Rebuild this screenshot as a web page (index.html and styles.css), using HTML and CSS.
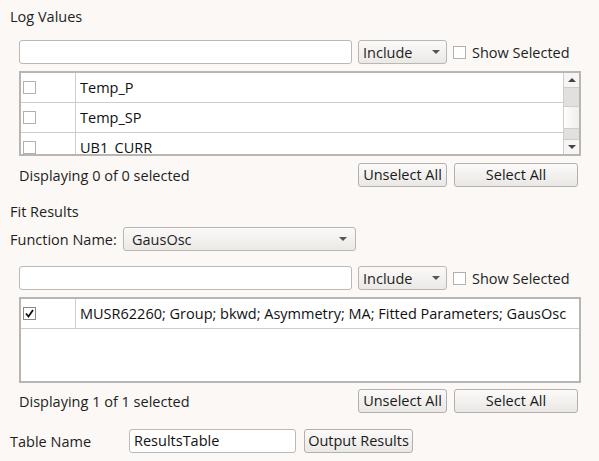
FILE: index.html
```html
<!DOCTYPE html>
<html>
<head>
<meta charset="utf-8">
<link rel="stylesheet" href="styles.css">
</head>
<body>
<div class="panel">
  <div class="title">Log Values</div>
  <div class="group">
    <div class="filter-row">
      <div class="search"></div>
      <div class="combo combo-inc"><span>Include</span><span class="arrow"></span></div>
      <label class="show"><span class="cb"></span><span>Show Selected</span></label>
    </div>
    <div class="table t1">
      <div class="rows">
        <div class="row"><div class="c1"><span class="cb"></span></div><div class="c2">Temp_P</div></div>
        <div class="row"><div class="c1"><span class="cb"></span></div><div class="c2">Temp_SP</div></div>
        <div class="row"><div class="c1"><span class="cb"></span></div><div class="c2">UB1_CURR</div></div>
      </div>
      <div class="scrollbar">
        <div class="sb-btn"><span class="tri-up"></span></div>
        <div class="sb-track t-a"></div>
        <div class="sb-thumb"></div>
        <div class="sb-track t-b"></div>
        <div class="sb-btn"><span class="tri-down"></span></div>
      </div>
    </div>
    <div class="foot">
      <span class="status">Displaying 0 of 0 selected</span>
      <div class="btns">
        <div class="btn b-unsel">Unselect All</div>
        <div class="btn b-sel">Select All</div>
      </div>
    </div>
  </div>

  <div class="title t-fit">Fit Results</div>
  <div class="func-row">
    <span class="func-label">Function Name:</span>
    <div class="combo combo-func"><span>GausOsc</span><span class="arrow"></span></div>
  </div>
  <div class="group">
    <div class="filter-row fr2">
      <div class="search"></div>
      <div class="combo combo-inc"><span>Include</span><span class="arrow"></span></div>
      <label class="show"><span class="cb"></span><span>Show Selected</span></label>
    </div>
    <div class="table t2">
      <div class="rows">
        <div class="row"><div class="c1"><span class="cb checked"><svg width="11" height="11" viewBox="0 0 11 11"><path d="M2 5.5 L4.5 8.5 L9 2" fill="none" stroke="#111" stroke-width="1.8"/></svg></span></div><div class="c2">MUSR62260; Group; bkwd; Asymmetry; MA; Fitted Parameters; GausOsc</div></div>
      </div>
    </div>
    <div class="foot f2">
      <span class="status">Displaying 1 of 1 selected</span>
      <div class="btns">
        <div class="btn b-unsel">Unselect All</div>
        <div class="btn b-sel">Select All</div>
      </div>
    </div>
  </div>
  <div class="name-row">
    <span class="name-label">Table Name</span>
    <div class="name-input">ResultsTable</div>
    <div class="btn b-out">Output Results</div>
  </div>
</div>
</body>
</html>
```

FILE: styles.css
```css
html, body {
  margin: 0;
  padding: 0;
  background: #fbf8f5;
}
body {
  font-family: "Open Sans", "Noto Sans", sans-serif;
  font-size: 14.5px;
  color: #1e1e1e;
  width: 599px;
  height: 461px;
  overflow: hidden;
}
.panel {
  padding: 7px 0 0 0;
}
.title {
  line-height: 20px;
  height: 20px;
  padding-left: 10px;
}
.t-fit {
  margin-top: 15px;
}
.group {
  padding-left: 19px;
  padding-right: 18px;
}
.filter-row {
  display: flex;
  align-items: center;
  height: 24px;
  margin-top: 13px;
}
.fr2 {
  margin-top: 15px;
}
.search {
  width: 331px;
  height: 22px;
  border: 1px solid #bdb9b4;
  border-radius: 3px;
  background: #fff;
}
.combo {
  display: flex;
  align-items: center;
  justify-content: space-between;
  height: 22px;
  border: 1px solid #bab6b1;
  border-radius: 3px;
  background: linear-gradient(#fbfaf9, #ebe9e6);
  box-sizing: content-box;
}
.combo-inc {
  width: 77px;
  margin-left: 6px;
  padding: 0 6px 0 4px;
}
.arrow {
  width: 0;
  height: 0;
  border-left: 4px solid transparent;
  border-right: 4px solid transparent;
  border-top: 4px solid #555;
}
.show {
  display: flex;
  align-items: center;
  margin-left: 6px;
}
.cb {
  display: inline-flex;
  align-items: center;
  justify-content: center;
  width: 11px;
  height: 11px;
  border: 1px solid #b3b1ae;
  background: #fff;
}
.show .cb {
  margin-right: 6px;
}
.cb.checked {
  border-color: #8b8986;
}
.table {
  display: flex;
  margin-top: 7px;
  border: 2px solid #b8b6b3;
  background: #fff;
  overflow: hidden;
}
.t1 {
  height: 81px;
}
.t2 {
  height: 82px;
}
.rows {
  flex: 1;
}
.row {
  display: flex;
  height: 29px;
  border-bottom: 1px solid #cfcdcb;
}
.c1 {
  width: 55px;
  border-right: 1px solid #cfcdcb;
  display: flex;
  align-items: center;
  padding-left: 2px;
  box-sizing: border-box;
}
.c2 {
  display: flex;
  align-items: center;
  padding-left: 4px;
  color: #111;
  white-space: nowrap;
}
.scrollbar {
  width: 15px;
  border-left: 1px solid #cfcdcb;
  display: flex;
  flex-direction: column;
  background: #f2f0ee;
}
.sb-btn {
  height: 14px;
  display: flex;
  align-items: center;
  justify-content: center;
  background: #f6f5f4;
}
.tri-up {
  border-left: 4px solid transparent;
  border-right: 4px solid transparent;
  border-bottom: 4px solid #444;
}
.tri-down {
  border-left: 4px solid transparent;
  border-right: 4px solid transparent;
  border-top: 4px solid #444;
}
.sb-track {
  background: #e2e0dd;
}
.t-a {
  height: 19px;
  border-top: 1px solid #cfcdcb;
}
.t-b {
  height: 11px;
  border-bottom: 1px solid #cfcdcb;
}
.sb-thumb {
  height: 21px;
  border-top: 1px solid #cfcdcb;
  border-bottom: 1px solid #cfcdcb;
  background: linear-gradient(90deg, #fdfdfc, #f0eeec);
}
.foot {
  display: flex;
  align-items: center;
  justify-content: space-between;
  margin-top: 7px;
  height: 24px;
  padding-right: 3px;
}
.f2 {
  margin-top: 6px;
}
.btns {
  display: flex;
  gap: 7px;
}
.btn {
  height: 22px;
  line-height: 22px;
  border: 1px solid #b4b0ab;
  border-radius: 3px;
  background: linear-gradient(#fbfaf9, #eae8e5);
  text-align: center;
  color: #1a1a1a;
  white-space: nowrap;
}
.b-unsel {
  width: 87px;
}
.b-sel {
  width: 122px;
}
.func-row {
  display: flex;
  align-items: center;
  height: 24px;
  margin-top: 5px;
  padding-left: 10px;
}
.func-label {
  width: 113px;
}
.combo-func {
  width: 215px;
  padding: 0 8px 0 8px;
}
.name-row {
  display: flex;
  align-items: center;
  height: 24px;
  margin-top: 16px;
  padding-left: 10px;
}
.name-label {
  width: 119px;
}
.name-input {
  width: 161px;
  height: 22px;
  line-height: 22px;
  padding-left: 4px;
  border: 1px solid #bdb9b4;
  border-radius: 3px;
  background: #fff;
  color: #111;
}
.b-out {
  width: 107px;
  margin-left: 8px;
}
```
